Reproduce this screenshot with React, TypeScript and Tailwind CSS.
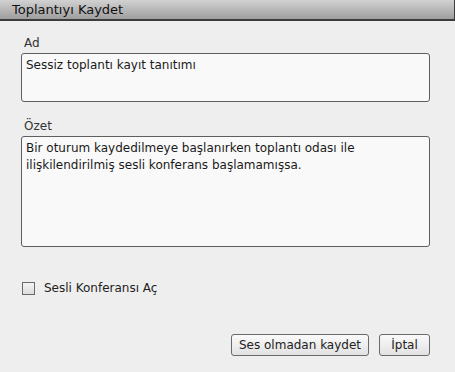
import React, { useState } from 'react';

const font = { fontFamily: '"DejaVu Sans", Verdana, sans-serif' };

export default function App() {
  const [name, setName] = useState('Sessiz toplantı kayıt tanıtımı');
  const [summary, setSummary] = useState(
    'Bir oturum kaydedilmeye başlanırken toplantı odası ile ilişkilendirilmiş sesli konferans başlamamışsa.'
  );
  const [audio, setAudio] = useState(false);

  return (
    <div className="w-[455px] h-[372px] bg-[#eeeeee] flex flex-col text-[#1a1a1a]" style={font}>
      <div className="h-[21px] shrink-0 bg-gradient-to-b from-[#d2d2d2] to-[#9e9e9e] border-b-2 border-r border-[#3c3c3c] pl-[12px] flex items-center text-[13px] text-[#111]">
        Toplantıyı Kaydet
      </div>

      <div className="flex flex-col px-[21px] pr-[25px]">
        <label className="mt-[14px] pl-[3px] text-[12px] leading-[16px] text-[#333]">Ad</label>
        <textarea
          value={name}
          onChange={(e) => setName(e.target.value)}
          className="mt-[2px] h-[49px] resize-none bg-[#f9f9f9] border border-[#5e5e5e] rounded-[3px] px-[4px] pt-[3px] pb-[2px] text-[12px] leading-[17px] outline-none"
        />

        <label className="mt-[16px] pl-[3px] text-[12px] leading-[16px] text-[#333]">Özet</label>
        <textarea
          value={summary}
          onChange={(e) => setSummary(e.target.value)}
          className="mt-[2px] h-[111px] resize-none bg-[#f9f9f9] border border-[#5e5e5e] rounded-[3px] px-[4px] pt-[3px] pb-[2px] text-[12px] leading-[17px] outline-none"
        />

        <label className="mt-[32px] flex items-center gap-[9px] text-[12px] text-[#222]">
          <span
            onClick={() => setAudio(!audio)}
            className="ml-[1px] w-[13px] h-[13px] border border-[#6a6a6a] bg-gradient-to-b from-[#f4f4f4] to-[#dcdcdc] flex items-center justify-center text-[10px] leading-none"
          >
            {audio ? '✓' : ''}
          </span>
          Sesli Konferansı Aç
        </label>

        <div className="mt-[37px] flex justify-end gap-[10px]">
          <button className="w-[138px] h-[22px] border border-[#6a6a6a] rounded-[3px] bg-gradient-to-b from-[#fafafa] to-[#e2e2e2] text-[12px] text-[#222]">
            Ses olmadan kaydet
          </button>
          <button className="w-[51px] h-[22px] border border-[#6a6a6a] rounded-[3px] bg-gradient-to-b from-[#fafafa] to-[#e2e2e2] text-[12px] text-[#222]">
            İptal
          </button>
        </div>
      </div>
    </div>
  );
}
